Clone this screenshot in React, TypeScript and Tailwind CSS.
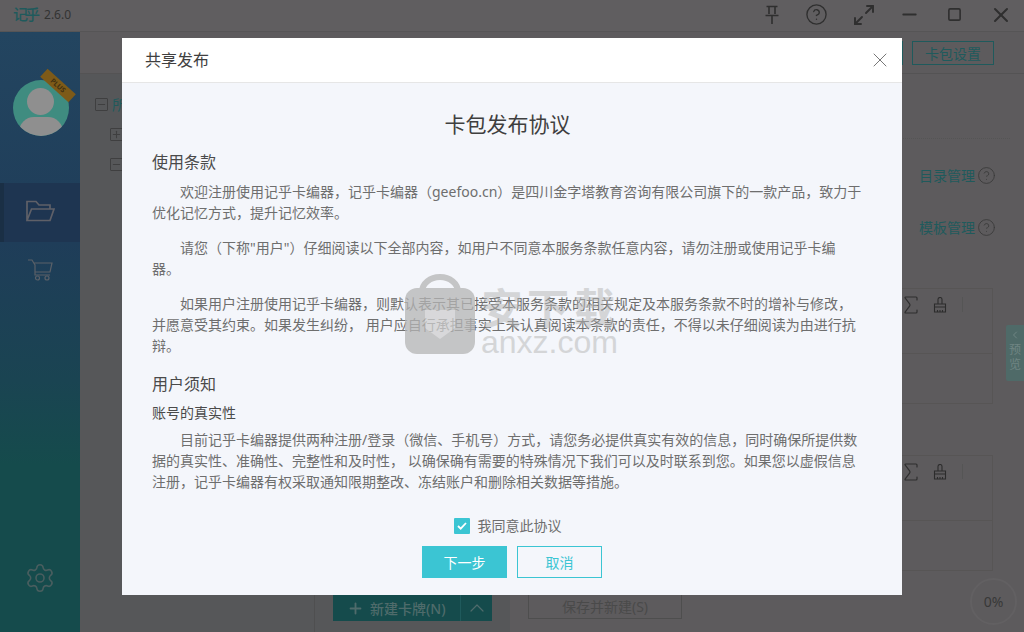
import { ChevronLeft, ChevronUp, CircleHelp, Maximize2, Minus, Plus, Settings, Sigma, Square, X } from "lucide-react";

const font = "[font-family:'Noto_Sans','Noto_Sans_CJK_SC','Liberation_Sans',sans-serif]";

function TreeBox({ plus }: { plus?: boolean }) {
  return (
    <span className="flex h-[13px] w-[13px] items-center justify-center rounded-[1px] border border-[#3f3f40] text-[#3f3f40]">
      {plus ? <Plus size={11} strokeWidth={2.2} /> : <Minus size={11} strokeWidth={2.2} />}
    </span>
  );
}

function PinIcon() {
  return (
    <svg width="16" height="20" viewBox="0 0 16 20" fill="none" stroke="#2f2f2f" strokeWidth="1.6">
      <path d="M2.5 1.5h11M5 2v7M11 2v7M1.5 10.5h13M8 11v8" />
    </svg>
  );
}

function BrushIcon() {
  return (
    <svg width="14" height="16" viewBox="0 0 14 16" fill="none" stroke="#2c2c2c" strokeWidth="1.1" className="ml-[10px] mt-[4px]">
      <path d="M5 7V2.5a2 2 0 0 1 4 0V7M1.5 7h11v3h-11zM1.5 10v5h11v-5M4.5 15v-2M7 15v-2M9.5 15v-2" />
    </svg>
  );
}

function FolderIcon() {
  return (
    <svg width="29" height="22" viewBox="0 0 29 22" fill="none" stroke="#5f6068" strokeWidth="1.7">
      <path d="M1 20.5V1.5h9l3 3.5h11v4M1 20.5L5.5 9h22.5L24 20.5z" />
    </svg>
  );
}

function CartIcon() {
  return (
    <svg width="25" height="22" viewBox="0 0 25 22" fill="none" stroke="#5a6068" strokeWidth="1.2">
      <path d="M0 1h4l3 5v10h15M5.5 4h18.5l-2 9H7" />
      <circle cx="9.5" cy="19" r="2" />
      <circle cx="19" cy="19" r="2" />
    </svg>
  );
}

function Editor({ first }: { first?: boolean }) {
  return (
    <div className={`${first ? "mt-[50px]" : "mt-[51px]"} h-[116px] w-[465px] border border-[#575555]`}>
      <div className="flex h-[65px] items-start justify-end border-b border-[#575555] pt-[4px] pr-[29px]">
        <Sigma size={24} strokeWidth={1.2} className="text-[#2f2f2f]" />
        <BrushIcon />
        <span className="ml-[15px] mt-[4px] h-[15px] w-px bg-[#555]" />
      </div>
    </div>
  );
}

function Paragraph({ children }: { children: string }) {
  return <p className="mb-[14px] indent-[28px] text-[14px] leading-[21px] text-[#6e6e6e]">{children}</p>;
}

export default function App() {
  return (
    <div className={`relative flex h-[632px] w-[1024px] flex-col overflow-hidden bg-[#5d5b5d] ${font}`}>
      <header className="flex h-[32px] shrink-0 items-center border-b border-[#565556] bg-[#605e60] pb-[2px] pl-[13px]">
        <span className="text-[15px] font-medium tracking-[-3px] text-[#1f5a5c]">记乎</span>
        <span className="ml-[7px] text-[12px] text-[#333]">2.6.0</span>
        <div className="ml-auto flex items-center text-[#2f2f2f]">
          <PinIcon />
          <CircleHelp size={23} strokeWidth={1.4} className="ml-[25px]" />
          <Maximize2 size={24} strokeWidth={1.9} className="ml-[24px]" />
          <Minus size={21} strokeWidth={2.4} className="ml-[23px]" />
          <Square size={15} strokeWidth={2.6} className="ml-[27px]" />
          <X size={24} strokeWidth={2} className="ml-[27px] mr-[11px]" />
        </div>
      </header>

      <div className="flex min-h-0 flex-1">
        <aside className="flex w-[80px] shrink-0 flex-col bg-[linear-gradient(180deg,#234560_0%,#1f3d59_35%,#1a4452_58%,#154b4c_72%,#154b4c_100%)]">
          <div className="relative ml-[13px] mt-[48px] h-[56px] w-[56px] shrink-0 overflow-hidden rounded-full bg-[#3f8c80]">
            <span className="absolute left-[14px] top-[8px] h-[27px] w-[27px] rounded-full bg-[#8f8f8f]" />
            <span className="absolute left-[6px] top-[37px] h-[30px] w-[44px] rounded-full bg-[#8f8f8f]" />
          </div>
          <div className="mt-[47px] flex h-[59px] shrink-0 items-center justify-center border-l-[4px] border-[#1a2f45] bg-[#1e3551] pb-[4px] pr-[4px]">
            <FolderIcon />
          </div>
          <div className="mt-[17px] flex justify-center">
            <CartIcon />
          </div>
          <div className="mt-auto mb-[38px] flex justify-center">
            <Settings size={32} strokeWidth={1.2} className="text-[#495e5f]" />
          </div>
        </aside>

        <div className="flex min-w-0 flex-1 flex-col">
          <div className="flex h-[42px] shrink-0 items-start justify-end gap-[9px] border-b border-[#545354] pr-[30px] pt-[9px]">
            <span className="h-[24px] w-[82px] border border-[#1f5a5c]" />
            <span className="flex h-[24px] w-[82px] items-center justify-center border border-[#1f5a5c] text-[14px] text-[#1f5a5c]">
              卡包设置
            </span>
          </div>
          <div className="flex min-h-0 flex-1">
            <section className="w-[235px] shrink-0 border-r border-[#4f4f50] bg-[#565759] pl-[15px] pt-[24px]">
              <div className="flex items-center gap-[4px]">
                <TreeBox />
                <span className="text-[14px] leading-[13px] text-[#1f5a5c]">所</span>
              </div>
              <div className="ml-[15px] mt-[17px] w-fit"><TreeBox plus /></div>
              <div className="ml-[15px] mt-[17px] w-fit"><TreeBox /></div>
            </section>
            <section className="w-[195px] shrink-0 bg-[#565759] pl-[18px] pt-[521px]">
              <div className="flex h-[26px] w-[159px] items-center bg-[#154b4c] text-[#4f6b6b]">
                <Plus size={17} strokeWidth={2.6} className="ml-[14px]" />
                <span className="ml-[6px] text-[14px] font-medium">新建卡牌(N)</span>
                <span className="ml-auto flex h-full w-[32px] items-center justify-center border-l border-[#1f5a5c]">
                  <ChevronUp size={24} strokeWidth={1.2} />
                </span>
              </div>
            </section>
            <section className="flex flex-1 flex-col items-start pl-[18px] pt-[64px]">
              <div className="h-px w-[482px] border-t border-dotted border-[#555]" />
              <div className="mt-[26px] flex w-[468px] items-center justify-end gap-[2px] text-[14px] text-[#1f5a5c]">
                目录管理 <CircleHelp size={19} strokeWidth={1.1} className="text-[#3a3a3a]" />
              </div>
              <div className="mt-[31px] flex w-[468px] items-center justify-end gap-[2px] text-[14px] text-[#1f5a5c]">
                模板管理 <CircleHelp size={19} strokeWidth={1.1} className="text-[#3a3a3a]" />
              </div>
              <Editor first />
              <Editor />
              <span className="mt-[23px] flex h-[25px] w-[154px] items-center justify-center border border-[#4e4e4e] text-[14px] text-[#4a4a4a]">
                保存并新建(S)
              </span>
            </section>
          </div>
        </div>
      </div>

      <div className="absolute left-[1006px] top-[325px] flex h-[56px] w-[18px] flex-col items-center rounded-l-[2px] bg-[#4f6a68] text-[12px] leading-[15px] text-[#6f8583]">
        <ChevronLeft size={12} className="mt-[4px]" />
        <span className="mt-[1px]">预</span>
        <span>览</span>
      </div>
      <div className="absolute left-[970px] top-[578px] flex h-[47px] w-[47px] items-center justify-center rounded-full border-[2px] border-[#626062] text-[14px] text-[#383838]">
        0%
      </div>
      <span className="absolute left-[39px] top-[80px] h-[11px] w-[38px] rotate-[42deg] bg-[#7d5a18] text-center text-[7px] font-bold leading-[11px] text-[#3f2f10]">
        PLUS
      </span>

      {/* dialog */}
      <div className="absolute left-[122px] top-[38px] flex h-[557px] w-[780px] flex-col bg-[#f4f6fb]">
        <div className="flex h-[45px] shrink-0 items-center justify-between border-b border-[#e6e6e6] bg-white pl-[23px] pr-[10px]">
          <span className="text-[16px] text-[#3f3f3f]">共享发布</span>
          <X size={24} strokeWidth={1} className="text-[#777]" />
        </div>
        <div className="flex-1 px-[30px] pt-[25px]">
          <h1 className="pr-[9px] text-center text-[21px] leading-[32px] text-[#3f3f3f]">卡包发布协议</h1>
          <h2 className="mt-[10px] text-[16px] leading-[24px] text-[#4a4a4a]">使用条款</h2>
          <div className="mt-[7px] w-[710px]">
            <Paragraph>欢迎注册使用记乎卡编器，记乎卡编器（geefoo.cn）是四川金字塔教育咨询有限公司旗下的一款产品，致力于优化记忆方式，提升记忆效率。</Paragraph>
            <Paragraph>请您（下称"用户"）仔细阅读以下全部内容，如用户不同意本服务条款任意内容，请勿注册或使用记乎卡编器。</Paragraph>
            <Paragraph>如果用户注册使用记乎卡编器，则默认表示其已接受本服务条款的相关规定及本服务条款不时的增补与修改，并愿意受其约束。如果发生纠纷， 用户应自行承担事实上未认真阅读本条款的责任，不得以未仔细阅读为由进行抗辩。</Paragraph>
          </div>
          <h2 className="mt-[16px] text-[16px] leading-[24px] text-[#4a4a4a]">用户须知</h2>
          <h3 className="mt-[6px] text-[14px] leading-[21px] text-[#4a4a4a]">账号的真实性</h3>
          <div className="mt-[6px] w-[710px]">
            <Paragraph>目前记乎卡编器提供两种注册/登录（微信、手机号）方式，请您务必提供真实有效的信息，同时确保所提供数据的真实性、准确性、完整性和及时性， 以确保确有需要的特殊情况下我们可以及时联系到您。如果您以虚假信息注册，记乎卡编器有权采取通知限期整改、冻结账户和删除相关数据等措施。</Paragraph>
          </div>
        </div>
        <div className="flex shrink-0 flex-col items-center pb-[17px]">
          <label className="mr-[9px] flex items-center gap-[8px] text-[14px] leading-[20px] text-[#6e6e6e]">
            <span className="flex h-[16px] w-[16px] items-center justify-center rounded-[1px] bg-[#3bc5d3]">
              <svg width="10" height="8" viewBox="0 0 10 8" fill="none" stroke="#fff" strokeWidth="1.8"><path d="M1 4l2.7 2.7L9 1" /></svg>
            </span>
            我同意此协议
          </label>
          <div className="mt-[10px] flex gap-[10px]">
            <button className="h-[32px] w-[85px] bg-[#3bc5d3] text-[14px] text-white">下一步</button>
            <button className="h-[32px] w-[85px] border border-[#3bc5d3] text-[14px] text-[#3bc5d3]">取消</button>
          </div>
        </div>
      </div>

      {/* watermark over the dialog */}
      <div className="pointer-events-none absolute left-[405px] top-[274px] flex h-[80px] w-[215px] items-start">
        <svg width="70" height="80" viewBox="0 0 70 80" className="opacity-75">
          <path d="M17 18a18 15 0 0 1 36 0" fill="none" stroke="#b5b5b5" strokeWidth="6" />
          <rect x="0" y="14" width="70" height="66" rx="12" fill="#b5b5b5" />
          <path d="M20 36h30v18l-15 11-15-11z" fill="#cfcfcf" />
        </svg>
        <div className="ml-[6px] mt-[13px] flex flex-col text-[#b5b5b5] opacity-50">
          <span className="text-[42px] font-bold leading-[42px] tracking-[4px]">安下载</span>
          <span className="text-[32px] leading-[26px] [font-family:'Liberation_Sans',sans-serif]">anxz.com</span>
        </div>
      </div>
    </div>
  );
}
